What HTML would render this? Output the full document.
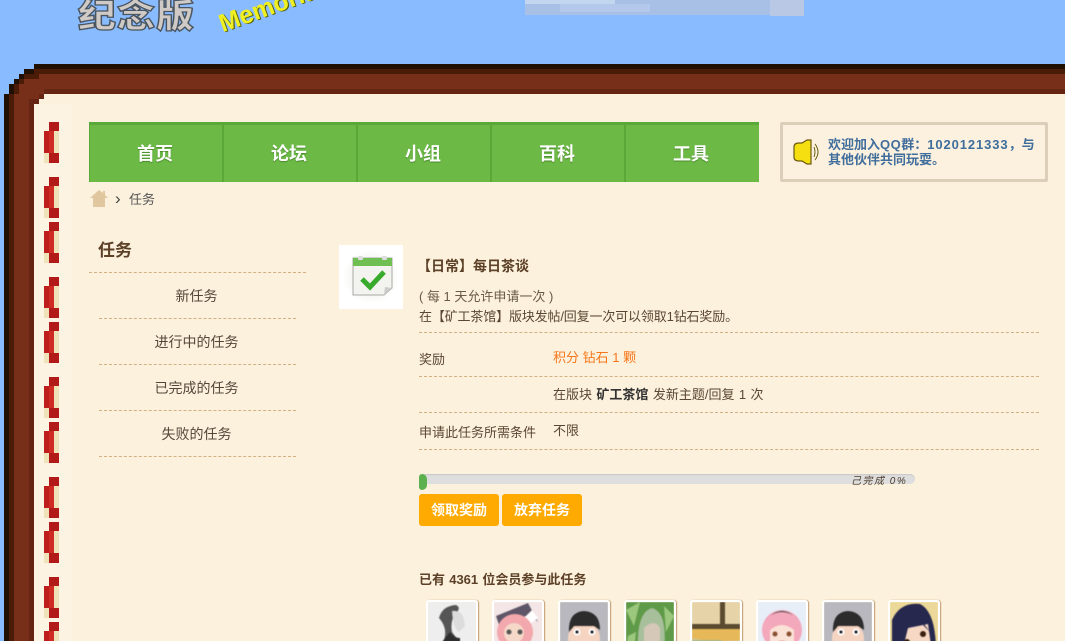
<!DOCTYPE html>
<html lang="zh"><head><meta charset="utf-8"><title>任务</title>
<style>
html,body{margin:0;padding:0;width:1065px;height:641px;overflow:hidden}
body{background:#88bbff}
#p{position:relative;width:1065px;height:641px;overflow:hidden;background:#88bbff;font-family:"Liberation Sans","Noto Sans CJK SC",sans-serif;font-size:13px;color:#5a4634}
.a{position:absolute;white-space:nowrap}
.d{position:absolute;height:0;border-top:1px dashed #d2b083}
.n{position:absolute;top:122px;height:60px;width:132px;text-align:center;line-height:64px;font-size:18px;font-weight:700;color:#fff;text-shadow:0 1px 1px #4b8a2d}
.nd{position:absolute;top:122px;width:2px;height:60px;background:#5aa838}
.av{position:absolute;top:600px;width:48px;height:50px;border:2px solid #fff;border-radius:3px;box-shadow:1px 0 1px #c09a70;overflow:hidden}
.av svg{display:block;filter:blur(.5px)}
.m{text-align:center;width:197px;left:98px;font-size:14px;color:#55463a}
</style></head><body><div id="p">
<svg class="a" style="left:0;top:0" width="1065" height="641" viewBox="0 0 1065 641">
<defs>
<g id="c1"><rect x="44" y="131" width="5" height="32" fill="#f0e2b8"/><rect x="54" y="131" width="5" height="22" fill="#f0e2b8"/><rect x="49" y="122" width="10" height="9" fill="#b11a18"/><rect x="44" y="131" width="10" height="22" fill="#bd1e1c"/><rect x="49" y="131" width="5" height="22" fill="#cf2a24"/><rect x="49" y="153" width="10" height="10" fill="#b11a18"/></g>
<radialGradient id="g" cx=".5" cy=".5" r=".5"><stop offset="0" stop-color="#e4e4e0"/><stop offset="1" stop-color="#fff"/></radialGradient>
</defs>
<rect x="525" y="0" width="278" height="15" fill="#a8bfe6"/><rect x="525" y="0" width="90" height="4" fill="#c3d6f0"/><rect x="560" y="4" width="90" height="8" fill="#b3c8ea"/><rect x="770" y="0" width="34" height="16" fill="#b9c8e4"/>
<path d="M34 64H1065V641H4V94H9V84H14V79H19V74H24V69H34Z" fill="#1f1003"/>
<path d="M34 69H1065V641H9V94H14V84H19V79H24V74H34Z" fill="#4a1c08"/>
<path d="M39 74H1065V641H14V94H19V84H24V79H39Z" fill="#772f1a"/>
<path d="M44 89H1065V94H44ZM29 99H39V104H34V641H29Z" fill="#652512"/><rect x="39" y="94" width="5" height="5" fill="#652512"/>
<path d="M44 94H1065V641H34V104H39V99H44Z" fill="#fcf1dc"/>
<rect x="34" y="104" width="38" height="537" fill="#fdf3e2"/>
<use href="#c1"/><use href="#c1" y="55"/><use href="#c1" y="100"/><use href="#c1" y="155"/><use href="#c1" y="200"/><use href="#c1" y="255"/><use href="#c1" y="300"/><use href="#c1" y="355"/><use href="#c1" y="400"/><use href="#c1" y="455"/><use href="#c1" y="500"/>
<!-- home -->
<path d="M90 198L99 190L103 193V191H105V195L108 198H105V207H93V198Z" fill="#e0c79f"/>
<!-- icon box -->
<rect x="339" y="245" width="64" height="64" fill="#fff"/>
<rect x="343" y="250" width="56" height="54" fill="url(#g)"/>
<path d="M353 258H392V288L384 295H353Z" fill="#f3f3f0" stroke="#a8a8a4" stroke-width="1"/>
<path d="M353 258H392V266H353Z" fill="#70bf52"/>
<rect x="358" y="256" width="5" height="4" rx="1" fill="#ddd"/><rect x="382" y="256" width="5" height="4" rx="1" fill="#ddd"/>
<path d="M362 279L370 287L384 272" fill="none" stroke="#38ab2c" stroke-width="5"/>
<path d="M384 295L385 287L392 288Z" fill="#ccc"/>
</svg>

<div class="a" style="left:78px;top:0;font-size:38px;line-height:38px;font-weight:900;color:#cfcac6;letter-spacing:1px;-webkit-text-stroke:1.5px #4a5560;transform:scale(1,.88);transform-origin:0 0">纪念版</div>
<div class="a" style="left:224px;top:12px;font-size:25px;line-height:24px;font-weight:700;color:#f0f020;text-shadow:1px 1px 0 #55600a;transform:rotate(-20deg);transform-origin:0 100%">Memorial</div>

<div class="a" style="left:89px;top:122px;width:670px;height:60px;background:#6cb946;box-shadow:inset 0 3px 0 #5aa838,inset 1px 0 0 #5aa838"></div>
<div class="nd" style="left:222px"></div><div class="nd" style="left:356px"></div><div class="nd" style="left:490px"></div><div class="nd" style="left:624px"></div>
<div class="n" style="left:89px">首页</div><div class="n" style="left:223px">论坛</div><div class="n" style="left:357px">小组</div><div class="n" style="left:491px">百科</div><div class="n" style="left:625px">工具</div>

<div class="a" style="left:780px;top:122px;width:262px;height:54px;border:3px solid #dccfba;border-radius:2px;background:#fcf1de"></div>
<svg class="a" style="left:790px;top:136px" width="30" height="32" viewBox="790 136 30 32">
<path d="M794 147Q794 143 799 143H802L807 140H811V164H807L802 161H799Q794 161 794 157Z" fill="#f5df10" stroke="#6b5a10" stroke-width="1.2"/>
<path d="M814 147Q816 152 814 157M815 144Q821 152 815 160" fill="none" stroke="#6b5a10" stroke-width="1"/>
</svg>
<div class="a" style="left:828px;top:137px;font-size:13px;line-height:15px;font-weight:700;color:#3f6d9c">欢迎加入<span style="letter-spacing:.5px">QQ</span>群：<span style="letter-spacing:.9px">1020121333</span>，与<br>其他伙伴共同玩耍。</div>

<div class="a" style="left:115px;top:190px;line-height:18px;font-size:17px;color:#444">›</div>
<div class="a" style="left:129px;top:191px;line-height:18px;color:#555">任务</div>

<div class="a" style="left:98px;top:239px;font-size:17px;line-height:24px;font-weight:700;color:#5c4028">任务</div>
<div class="d" style="left:89px;top:272px;width:217px"></div>
<div class="a m" style="top:286px;line-height:20px">新任务</div>
<div class="d" style="left:99px;top:318px;width:197px"></div>
<div class="a m" style="top:332px;line-height:20px">进行中的任务</div>
<div class="d" style="left:99px;top:364px;width:197px"></div>
<div class="a m" style="top:378px;line-height:20px">已完成的任务</div>
<div class="d" style="left:99px;top:410px;width:197px"></div>
<div class="a m" style="top:424px;line-height:20px">失败的任务</div>
<div class="d" style="left:99px;top:456px;width:197px"></div>

<div class="a" style="left:417px;top:257px;font-size:14px;line-height:18px;font-weight:700;color:#5c4028">【日常】每日茶谈</div>
<div class="a" style="left:419px;top:288px;line-height:18px;color:#6a5a48">( 每 1 天允许申请一次 )</div>
<div class="a" style="left:419px;top:308px;line-height:18px;color:#5a4634;letter-spacing:-.15px">在【矿工茶馆】版块发帖/回复一次可以领取1钻石奖励。</div>
<div class="d" style="left:419px;top:332px;width:620px"></div>
<div class="a" style="left:419px;top:351px;line-height:18px">奖励</div>
<div class="a" style="left:553px;top:349px;line-height:18px;color:#f5761a;">积分 钻石 1 颗</div>
<div class="d" style="left:419px;top:376px;width:620px"></div>
<div class="a" style="left:553px;top:386px;line-height:18px;word-spacing:.8px">在版块 <b style="color:#333">矿工茶馆</b> 发新主题/回复 1 次</div>
<div class="d" style="left:419px;top:412px;width:620px"></div>
<div class="a" style="left:419px;top:424px;line-height:18px">申请此任务所需条件</div>
<div class="a" style="left:553px;top:422px;line-height:18px">不限</div>
<div class="d" style="left:419px;top:449px;width:620px"></div>

<div class="a" style="left:419px;top:474px;width:496px;height:10px;background:#dedede;border-radius:5px;box-shadow:inset 0 1px 1px #c8c8c8"></div>
<div class="a" style="left:419px;top:474px;width:8px;height:16px;background:#5cb04e;border-radius:3px 5px 5px 3px"></div>
<div class="a" style="left:851px;top:475px;line-height:13px;font-size:10px;font-style:italic;letter-spacing:1.5px;color:#4a3a2a">己完成 0%</div>

<div class="a" style="left:419px;top:494px;width:80px;height:32px;background:#ffaa00;border-radius:3px;color:#fff;font-size:14px;font-weight:700;text-align:center;line-height:32px">领取奖励</div>
<div class="a" style="left:502px;top:494px;width:80px;height:32px;background:#ffaa00;border-radius:3px;color:#fff;font-size:14px;font-weight:700;text-align:center;line-height:32px">放弃任务</div>

<div class="a" style="left:419px;top:571px;line-height:18px;font-weight:700;color:#5c4028;word-spacing:.6px">已有 4361 位会员参与此任务</div>

<div class="av" style="left:426px"><svg width="48" height="50"><rect width="48" height="50" fill="#eeeeee"/><path d="M11 16Q14 4 28 3Q34 6 27 12Q22 20 24 30L30 38H16Q20 26 11 16Z" fill="#555"/><path d="M24 9Q34 8 36 18L37 24L31 30Q25 26 24 9Z" fill="#dcdcdc"/><path d="M22 30Q26 36 32 36V50H14V40Z" fill="#2e2e2e"/></svg></div>
<div class="av" style="left:492px"><svg width="48" height="50"><rect width="48" height="50" fill="#f4e6e6"/><path d="M2 14L34 1L44 20L36 12L6 26Z" fill="#5e5668"/><path d="M30 16L38 8L44 16L36 22Z" fill="#fff"/><circle cx="21" cy="30" r="18" fill="#f2a8ac"/><circle cx="20" cy="31" r="10" fill="#f6d8c8"/><circle cx="15" cy="30" r="2.5" fill="#555"/><circle cx="26" cy="30" r="2.5" fill="#555"/></svg></div>
<div class="av" style="left:558px"><svg width="48" height="50"><rect width="48" height="50" fill="#b8b8be"/><circle cx="24" cy="36" r="16" fill="#f6d4c2"/><path d="M9 30Q8 10 24 9Q40 10 40 28L34 24H14Z" fill="#2c2c2c"/><circle cx="17" cy="30" r="3.5" fill="#fff"/><circle cx="32" cy="30" r="3.5" fill="#fff"/><circle cx="17" cy="30" r="1.5" fill="#111"/><circle cx="32" cy="30" r="1.5" fill="#111"/></svg></div>
<div class="av" style="left:624px"><svg width="48" height="50"><rect width="48" height="50" fill="#5f9a48"/><path d="M0 8L14 0L8 24ZM38 4L48 14L40 30ZM2 34L10 30L8 50H0Z" fill="#9cc87e"/><path d="M12 50Q10 10 26 6Q42 10 38 50Z" fill="#a8bf9c"/><path d="M18 50V26Q28 16 34 26V50Z" fill="#d6c8b8"/></svg></div>
<div class="av" style="left:690px"><svg width="48" height="50"><rect width="48" height="50" fill="#d8c48c"/><rect width="48" height="22" fill="#e6d4a8"/><rect x="28" y="0" width="5" height="30" fill="#5a4a30"/><rect y="22" width="48" height="5" fill="#5a4a30"/><path d="M0 27H48V38L20 40L0 36Z" fill="#e6b858"/><path d="M0 38H30V50H0Z" fill="#a8b890"/></svg></div>
<div class="av" style="left:756px"><svg width="48" height="50"><rect width="48" height="50" fill="#e8eef8"/><circle cx="24" cy="28" r="20" fill="#f4a8bc"/><path d="M8 18Q24 0 40 18L36 14Q24 6 12 14Z" fill="#444"/><path d="M12 28Q24 18 36 28V42Q24 50 12 42Z" fill="#fbe2d6"/><circle cx="17" cy="32" r="2.5" fill="#8a5030"/><circle cx="31" cy="32" r="2.5" fill="#8a5030"/><path d="M21 39H27L24 43Z" fill="#d05060"/></svg></div>
<div class="av" style="left:822px"><svg width="48" height="50"><rect width="48" height="50" fill="#b8b8be"/><circle cx="24" cy="36" r="16" fill="#f6d4c2"/><path d="M9 30Q8 10 24 9Q40 10 40 28L34 24H14Z" fill="#2c2c2c"/><circle cx="17" cy="30" r="3.5" fill="#fff"/><circle cx="32" cy="30" r="3.5" fill="#fff"/><circle cx="17" cy="30" r="1.5" fill="#111"/><circle cx="32" cy="30" r="1.5" fill="#111"/></svg></div>
<div class="av" style="left:888px"><svg width="48" height="50"><rect width="48" height="50" fill="#ecd898"/><path d="M2 50V18Q10 0 30 2Q46 10 46 50Z" fill="#26284e"/><path d="M12 50L18 26L38 22L42 50Z" fill="#f6d8c4"/><path d="M18 26L28 14L40 30L32 22Z" fill="#26284e"/><circle cx="33" cy="32" r="3" fill="#3a2010"/><circle cx="17" cy="40" r="3" fill="#3a2010"/></svg></div>
</div></body></html>
